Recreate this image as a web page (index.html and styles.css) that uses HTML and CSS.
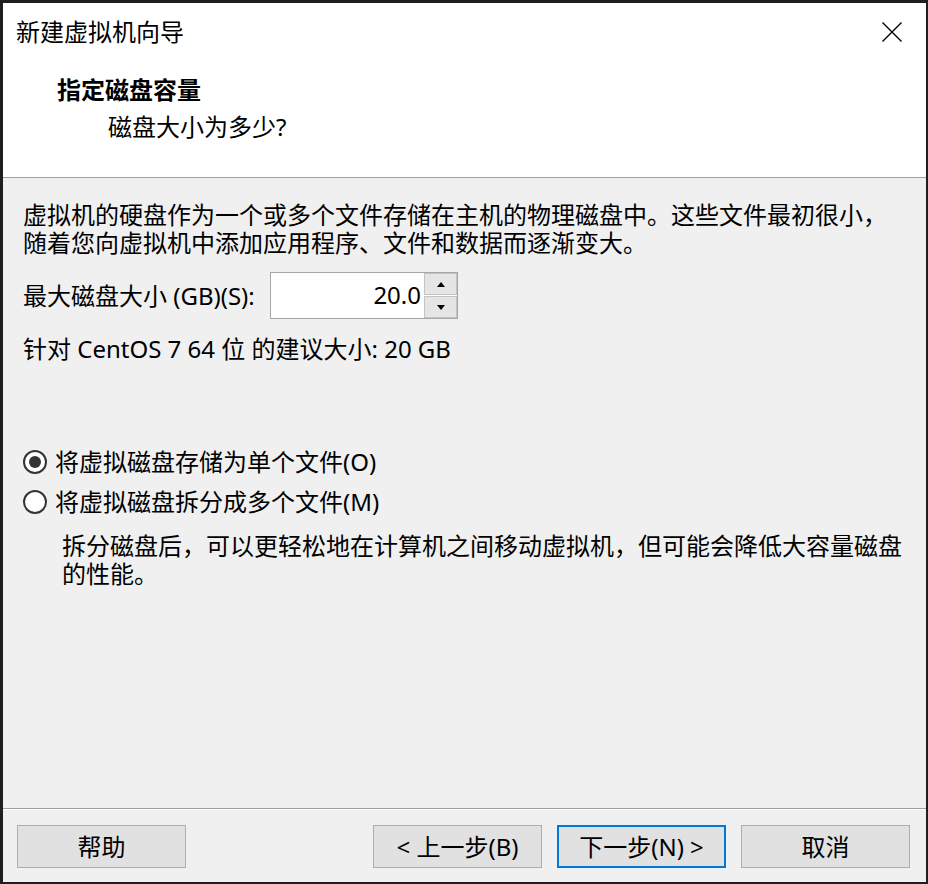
FILE: index.html
```html
<!DOCTYPE html>
<html lang="zh-CN">
<head>
<meta charset="utf-8">
<title>新建虚拟机向导</title>
<link rel="stylesheet" href="styles.css">
</head>
<body>
<div class="window">
  <div class="header">
    <div class="titlebar">
      <span class="title">新建虚拟机向导</span>
      <span class="close" aria-label="关闭">
        <svg width="20" height="20" viewBox="0 0 20 20"><path d="M0.5 0.5 L19.5 19.5 M19.5 0.5 L0.5 19.5" stroke="#000" stroke-width="1.4" fill="none"/></svg>
      </span>
    </div>
    <div class="page-title">指定磁盘容量</div>
    <div class="page-sub">磁盘大小为多少?</div>
  </div>

  <div class="main">
    <p class="intro">虚拟机的硬盘作为一个或多个文件存储在主机的物理磁盘中。这些文件最初很小，<br>随着您向虚拟机中添加应用程序、文件和数据而逐渐变大。</p>

    <div class="size-row">
      <span class="label">最大磁盘大小 (GB)(S):</span>
      <div class="spin">
        <div class="spin-field">20.0</div>
        <div class="spin-btns">
          <div class="spin-btn"><span class="tri-up"></span></div>
          <div class="spin-btn"><span class="tri-down"></span></div>
        </div>
      </div>
    </div>

    <p class="recommend">针对 CentOS 7 64 位 的建议大小: 20 GB</p>

    <div class="options">
      <div class="radio-row">
        <span class="radio checked"></span>
        <span>将虚拟磁盘存储为单个文件(O)</span>
      </div>
      <div class="radio-row">
        <span class="radio"></span>
        <span>将虚拟磁盘拆分成多个文件(M)</span>
      </div>
      <p class="desc">拆分磁盘后，可以更轻松地在计算机之间移动虚拟机，但可能会降低大容量磁盘<br>的性能。</p>
    </div>
  </div>

  <div class="footer">
    <button class="btn">帮助</button>
    <div class="btn-group">
      <button class="btn">&lt; 上一步(B)</button>
      <button class="btn default">下一步(N) &gt;</button>
      <button class="btn">取消</button>
    </div>
  </div>
</div>
</body>
</html>
```

FILE: styles.css
```css
* {
  box-sizing: border-box;
}

html, body {
  margin: 0;
  padding: 0;
}

body {
  background: #1f1f1f;
  width: 928px;
  height: 884px;
  overflow: hidden;
  font-family: "Noto Sans", "Noto Sans CJK SC", sans-serif;
  font-size: 24px;
  line-height: 28px;
  color: #000;
}

.window {
  margin: 3px 2px 2px 3px;
  width: 923px;
  height: 879px;
  background: #f0f0f0;
  display: flex;
  flex-direction: column;
}

/* header */
.header {
  background: #fff;
  height: 175px;
  border-bottom: 1px solid #a0a0a0;
  flex: none;
}

.titlebar {
  display: flex;
  align-items: center;
  justify-content: space-between;
  padding: 13px 24px 0 13px;
  height: 45px;
}

.title {
  line-height: 32px;
}

.close {
  display: flex;
  width: 20px;
  height: 20px;
}

.page-title {
  font-weight: 700;
  line-height: 32px;
  margin-top: 26px;
  padding-left: 54px;
}

.page-sub {
  line-height: 32px;
  margin-top: 5px;
  padding-left: 105px;
}

/* main */
.main {
  flex: 1;
  padding: 23px 20px 0 20px;
}

.main p {
  margin: 0;
}

.intro {
  white-space: nowrap;
}

.size-row {
  display: flex;
  align-items: center;
  margin-top: 15px;
}

.label {
  width: 247px;
  flex: none;
}

.spin {
  display: flex;
  width: 188px;
  height: 47px;
  border: 1px solid #a6a6a6;
  background: #fff;
}

.spin-field {
  flex: 1;
  text-align: right;
  padding-right: 2px;
  line-height: 43px;
}

.spin-btns {
  width: 34px;
  display: flex;
  flex-direction: column;
  gap: 1px;
  padding: 0 0 0 1px;
  background: #fff;
}

.spin-btn {
  flex: 1;
  background: #e5e5e5;
  border: 1px solid #c4c4c4;
  display: flex;
  align-items: center;
  justify-content: center;
}

.tri-up {
  width: 0;
  height: 0;
  border-left: 4px solid transparent;
  border-right: 4px solid transparent;
  border-bottom: 5px solid #000;
}

.tri-down {
  width: 0;
  height: 0;
  border-left: 4px solid transparent;
  border-right: 4px solid transparent;
  border-top: 5px solid #000;
}

.recommend {
  margin-top: 16px !important;
}

.options {
  margin-top: 85px;
  display: flex;
  flex-direction: column;
}

.radio-row {
  display: flex;
  align-items: center;
  gap: 8px;
  height: 28px;
  margin-bottom: 12px;
}

.radio {
  width: 24px;
  height: 24px;
  border-radius: 50%;
  border: 2px solid #333;
  background: #fff;
  display: flex;
  align-items: center;
  justify-content: center;
  flex: none;
}

.radio.checked::after {
  content: "";
  width: 12px;
  height: 12px;
  border-radius: 50%;
  background: #333;
}

.desc {
  margin-top: 4px !important;
  padding-left: 39px;
  white-space: nowrap;
}

/* footer */
.footer {
  flex: none;
  height: 74px;
  border-top: 1px solid #a0a0a0;
  box-shadow: inset 0 1px 0 #fff;
  display: flex;
  justify-content: space-between;
  padding: 16px 16px 0 14px;
}

.btn-group {
  display: flex;
  gap: 15px;
}

.btn {
  width: 169px;
  height: 43px;
  background: #e1e1e1;
  border: 1px solid #adadad;
  font-family: inherit;
  font-size: 24px;
  color: #000;
  padding: 0;
  margin: 0;
  line-height: 28px;
}

.btn.default {
  border: 2px solid #0078d7;
}
```
